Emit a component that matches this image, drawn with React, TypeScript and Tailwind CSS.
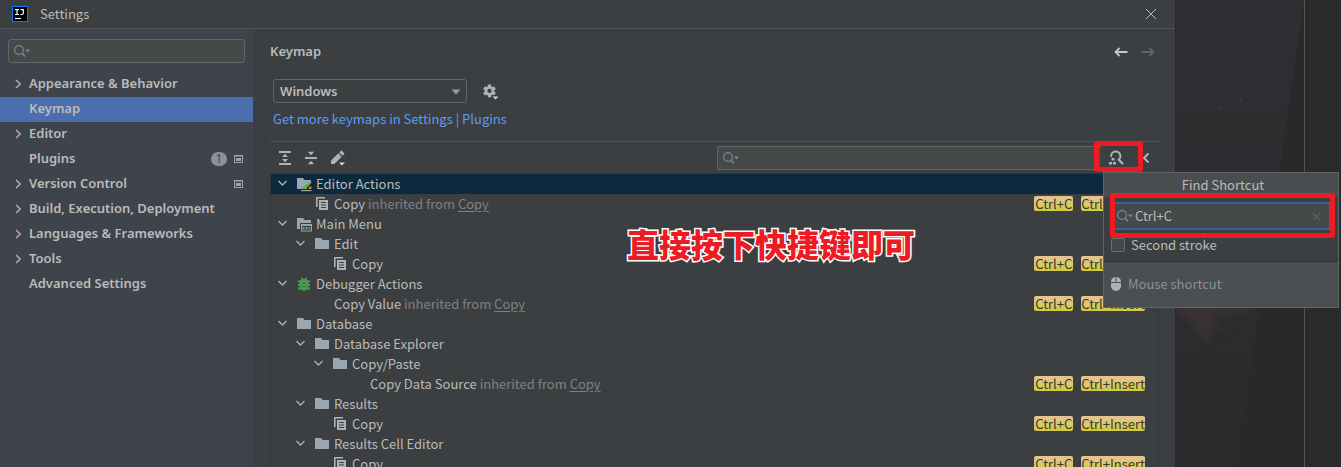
import type { ReactNode } from "react";

function SearchIcon() {
  return (
    <svg width="18" height="14" viewBox="0 0 18 14" fill="none" className="shrink-0">
      <circle cx="6" cy="6" r="4.4" stroke="#7b868c" strokeWidth="1.2" />
      <path d="M9 9.2 L12 12.4" stroke="#7b868c" strokeWidth="1.6" />
      <path d="M12 5.500h5l-2.500 3z" fill="#7b868c" />
    </svg>
  );
}

function ChevronRight() {
  return (
    <svg width="8" height="10" viewBox="0 0 8 10" fill="none">
      <path d="M1 1 L5.200 5 L1 9" stroke="#adb0b3" strokeWidth="1.5" />
    </svg>
  );
}

function ChevronDown() {
  return (
    <svg width="16" height="16" viewBox="0 0 16 16" fill="none">
      <path d="M4.500 5 L8.500 9 L12.500 5" stroke="#adb0b3" strokeWidth="1.4" />
    </svg>
  );
}

function FolderIcon() {
  return (
    <svg width="16" height="16" viewBox="0 0 16 16">
      <path d="M1 2h6l1.6 2H15v9H1z" fill="#9aa7b0" />
    </svg>
  );
}

function EditorFolderIcon() {
  return (
    <svg width="16" height="16" viewBox="0 0 16 16">
      <path d="M1 2h6l1.6 2H15v1.200L8 12l-2 1H1z" fill="#9aa7b0" />
      <path d="M7 12.500 L8.500 9.500 L13.500 4.500l2 2L10 12z" fill="#9aa7b0" />
      <path d="M5.500 13v-2h2.500v-1.500h2V8h1.500V6.500H14v2h-1.500V10H11v3z" fill="#62b543" />
      <rect x="12.500" y="10.500" width="3" height="2.500" fill="#f26522" />
      <rect x="5" y="14" width="10.500" height="1.200" fill="#9aa7b0" />
    </svg>
  );
}

function MenuFolderIcon() {
  return (
    <svg width="16" height="16" viewBox="0 0 16 16">
      <path d="M1 2h6l1.6 2H15v3H4v6H1z" fill="#9aa7b0" />
      <path d="M5 8h11v7.500H5z" fill="#9aa7b0" />
      <path d="M6 10h9v4.500H6z" fill="#33393c" />
      <rect x="6.500" y="11" width="2" height="2.500" fill="#62b543" />
      <rect x="9.500" y="11" width="2" height="2.500" fill="#40b6e0" />
      <rect x="12.500" y="11" width="2" height="2.500" fill="#f26522" />
    </svg>
  );
}

function CopyIcon() {
  return (
    <svg width="16" height="16" viewBox="0 0 16 16">
      <path d="M2 1h9v1.600H3.600V11H2z" fill="#afb1b3" />
      <path d="M5 4h9v10H5z" fill="#afb1b3" />
      <path d="M7 6.500h5M7 9h5M7 11.500h5" stroke="#3c3f41" strokeWidth="1.100" />
    </svg>
  );
}

function BugIcon() {
  return (
    <svg width="16" height="16" viewBox="0 0 16 16" fill="none">
      <path d="M5 1.500 L7 4 M11 1.500 L9 4" stroke="#499c54" strokeWidth="1.400" />
      <path d="M2 5.500h12M2 9h12M2 12.500h12" stroke="#499c54" strokeWidth="1.800" />
      <path d="M8 2.800c2 0 3.200 1 3.600 2.200.5 1.500.9 3 .9 4.500C12.500 12.500 10.500 14.500 8 14.500S3.500 12.500 3.500 9.500C3.500 8 3.900 6.500 4.400 5 4.800 3.800 6 2.800 8 2.800z" fill="#499c54" />
      <path d="M5.500 7.300h5M5.500 10.700h5" stroke="#41694a" strokeWidth="1" />
    </svg>
  );
}

function ProjectIcon() {
  return (
    <svg width="9" height="8" viewBox="0 0 9 8" fill="none">
      <rect x="0.500" y="0.500" width="8" height="7" stroke="#9aa7b0" />
      <rect x="2" y="3" width="5" height="3" fill="#9aa7b0" />
      <path d="M0 1h9" stroke="#9aa7b0" />
    </svg>
  );
}

function GearIcon() {
  return (
    <svg width="18" height="18" viewBox="0 0 18 18">
      <g fill="#afb1b3">
        <rect x="6.800" y="2.500" width="3.400" height="12.800" />
        <rect x="6.800" y="2.500" width="3.400" height="12.800" transform="rotate(60 8.500 8.900)" />
        <rect x="6.800" y="2.500" width="3.400" height="12.800" transform="rotate(120 8.500 8.900)" />
        <circle cx="8.500" cy="8.900" r="4.800" />
      </g>
      <circle cx="8.500" cy="8.900" r="2.100" fill="#3c3f41" />
      <path d="M11 13.500h7v3h-7z" fill="#3c3f41" />
      <path d="M11.500 14.500h6l-3 3z" fill="#d4d6d8" />
    </svg>
  );
}

function ExpandAllIcon() {
  return (
    <svg width="16" height="16" viewBox="0 0 16 16" fill="#afb1b3">
      <path d="M2 1h12v2H2zM2 13h12v2H2zM8 3.800l3 3.200H5zM8 12.200L11 9H5z" />
    </svg>
  );
}

function CollapseAllIcon() {
  return (
    <svg width="16" height="16" viewBox="0 0 16 16" fill="#afb1b3">
      <path d="M2 7h12v2H2zM4.800 1.800h6.400L8 5.300zM4.800 14.200h6.400L8 10.700z" />
    </svg>
  );
}

function PencilIcon() {
  return (
    <svg width="18" height="16" viewBox="0 0 18 16">
      <path d="M2 14v-3.400L9.300 3.300l3.400 3.400L5.400 14zM10.200 2.400L11.700.9a1 1 0 011.400 0l2 2a1 1 0 010 1.400l-1.500 1.500z" fill="#afb1b3" />
      <path d="M10 12.500h6l-3 3z" fill="#d4d6d8" />
    </svg>
  );
}

function FindShortcutIcon() {
  return (
    <svg width="16" height="16" viewBox="0 0 16 16" fill="none">
      <path d="M3.200 6.800A4.600 4.600 0 1 1 9.800 10.200" stroke="#afb1b3" strokeWidth="2" />
      <path d="M10.500 9.500 L15 14" stroke="#afb1b3" strokeWidth="2.400" />
      <path d="M3.500 8h3v2.500h-3zM1 12h3v2.500H1zM5 12h3v2.500H5z" fill="#afb1b3" />
    </svg>
  );
}

function Arrow({ flip, color }: { flip?: boolean; color: string }) {
  return (
    <svg width="14" height="10" viewBox="0 0 14 10" fill="none" className={flip ? "rotate-180" : ""}>
      <path d="M13.500 5H2M5.500 1 L1.500 5 L5.500 9" stroke={color} strokeWidth="1.800" />
    </svg>
  );
}

function MouseIcon() {
  return (
    <svg width="10" height="14" viewBox="0 0 10 14">
      <path d="M4.500 0v5H0C0 2 1.500.2 4.500 0zM5.500 0C8.500.2 10 2 10 5H5.500zM0 6h10v3a5 5 0 01-10 0z" fill="#afb1b3" />
    </svg>
  );
}

type Category = { label: string; open?: boolean; badge?: string; project?: boolean; active?: boolean };

const categories: Category[] = [
  { label: "Appearance & Behavior", open: true },
  { label: "Keymap", active: true },
  { label: "Editor", open: true },
  { label: "Plugins", badge: "1", project: true },
  { label: "Version Control", open: true, project: true },
  { label: "Build, Execution, Deployment", open: true },
  { label: "Languages & Frameworks", open: true },
  { label: "Tools", open: true },
  { label: "Advanced Settings" },
];

type Row = { level: number; label: string; icon?: ReactNode; group?: boolean; inherited?: boolean; keys?: boolean; selected?: boolean };

const rows: Row[] = [
  { level: 0, label: "Editor Actions", icon: <EditorFolderIcon />, group: true, selected: true },
  { level: 1, label: "Copy", icon: <CopyIcon />, inherited: true, keys: true },
  { level: 0, label: "Main Menu", icon: <MenuFolderIcon />, group: true },
  { level: 1, label: "Edit", icon: <FolderIcon />, group: true },
  { level: 2, label: "Copy", icon: <CopyIcon />, keys: true },
  { level: 0, label: "Debugger Actions", icon: <BugIcon />, group: true },
  { level: 1, label: "Copy Value", inherited: true, keys: true },
  { level: 0, label: "Database", icon: <FolderIcon />, group: true },
  { level: 1, label: "Database Explorer", icon: <FolderIcon />, group: true },
  { level: 2, label: "Copy/Paste", icon: <FolderIcon />, group: true },
  { level: 3, label: "Copy Data Source", inherited: true, keys: true },
  { level: 1, label: "Results", icon: <FolderIcon />, group: true },
  { level: 2, label: "Copy", icon: <CopyIcon />, keys: true },
  { level: 1, label: "Results Cell Editor", icon: <FolderIcon />, group: true },
  { level: 2, label: "Copy", icon: <CopyIcon />, keys: true },
];

const indents = ["pl-[3px]", "pl-[21px]", "pl-[39px]", "pl-[57px]"];

function Keys({ text }: { text: string }) {
  return (
    <kbd className="flex h-[15px] min-w-[39px] items-center justify-center rounded-[2px] bg-linear-to-b from-[#e6c393] to-[#d0cb38] font-[inherit] text-[13px] leading-[15px] text-[#3a3a2c]">
      {text}
    </kbd>
  );
}

function TreeRow({ row }: { row: Row }) {
  return (
    <li
      role="treeitem"
      aria-level={row.level + 1}
      aria-selected={!!row.selected}
      className={`flex h-5 items-center pr-[13px] ${indents[row.level]} ${row.selected ? "bg-[#0d293e]" : ""}`}
    >
      <span className="mr-1.5 w-4 shrink-0">{row.group && <ChevronDown />}</span>
      <span className="mr-1 w-4 shrink-0">{row.icon}</span>
      <span className="leading-5 whitespace-nowrap">
        {row.label}
        {row.inherited && (
          <span className="text-[#7f8182]">
            {" "}inherited from <a href="#copy" className="underline underline-offset-2">Copy</a>
          </span>
        )}
      </span>
      {row.keys && (
        <span className="ml-auto flex gap-2 pb-px">
          <Keys text="Ctrl+C" />
          <Keys text="Ctrl+Insert" />
        </span>
      )}
    </li>
  );
}

function FindShortcutPopup() {
  return (
    <section className="absolute top-[172px] right-0.5 w-[236px] border border-[#616365] bg-[#3c3f41]">
      <h2 className="bg-[#4a4d4f] pl-1 text-center leading-6">Find Shortcut</h2>
      <div className="relative px-[7px] pt-[5px]">
        <label className="flex h-7 items-center border-2 border-[#3d6185] bg-[#45494a] pr-2 pl-[3px]">
          <SearchIcon />
          <input aria-label="Shortcut" defaultValue="Ctrl+C" className="min-w-0 flex-1 bg-transparent pl-px outline-none" />
          <button aria-label="Clear" type="button">
            <svg width="9" height="9" viewBox="0 0 9 9" fill="none">
              <path d="M1 1l7 7M8 1L1 8" stroke="#6c7072" />
            </svg>
          </button>
        </label>
        <div className="pointer-events-none absolute -top-1 right-[3px] left-1.5 h-[45px] rounded-[3px] border-[5px] border-[#ed1c24]" />
      </div>
      <div className="flex h-[31px] items-center gap-1.5 px-[7px] pb-0.5">
        <input id="second" type="checkbox" className="h-3.5 w-3.5 appearance-none rounded-[2px] border border-[#6b6b6b] bg-[#43494a]" />
        <label htmlFor="second">Second stroke</label>
      </div>
      <div className="flex h-[46px] items-center gap-[7px] border-t border-[#2f3234] bg-[#4b4f51] px-[7px] pb-0.5 text-[#8c8f91]">
        <MouseIcon />
        Mouse shortcut
      </div>
    </section>
  );
}

function Backdrop() {
  return (
    <div className="w-[166px] shrink-0 border-l border-[#262829] bg-[#29292b]">
      <svg className="h-full w-full" viewBox="0 0 165 467" preserveAspectRatio="none">
        <defs>
          <linearGradient id="shade" x1="0" y1="0" x2="0" y2="1">
            <stop offset="0" stopColor="#302e32" />
            <stop offset="0.600" stopColor="#2d2c2f" />
            <stop offset="1" stopColor="#2a2a2c" />
          </linearGradient>
          <filter id="soft"><feGaussianBlur stdDeviation="3" /></filter>
        </defs>
        <path d="M0 0H128L60 467H0z" fill="url(#shade)" />
        <path d="M129 0H165V467H129z" fill="#2a2a2d" />
        <path d="M0 300H80L70 313 44 314 34 320 56 334 34 328 36 344 22 334 10 318 0 312z" fill="#383335" filter="url(#soft)" />
        <path d="M128.500 0V467" stroke="#545454" />
        <circle cx="43" cy="108" r="1.500" fill="#3b3a3e" />
        <circle cx="65" cy="101" r="1.500" fill="#3b3a3e" />
      </svg>
    </div>
  );
}

export default function App() {
  return (
    <div className="relative flex h-screen overflow-hidden bg-[#3c3f41] font-['Noto_Sans_CJK_SC',sans-serif] text-[13px] text-[#bbbbbb]">
      <div className="flex min-w-0 flex-1 flex-col">
        <header className="flex h-[29px] shrink-0 items-center border-b border-[#515354] pr-[18px] pl-3">
          <svg width="16" height="16" viewBox="0 0 16 16" fill="none">
            <rect x="0.500" y="0.500" width="15" height="15" fill="#000" stroke="#087cfa" />
            <path d="M3 3.600h4M5 3.600v5M3 8.500h4M8.500 3.600h2.800v3.400q0 1.500-1.500 1.500H8.300" stroke="#fff" strokeWidth="1.200" />
            <path d="M3 12.500h6" stroke="#fff" strokeWidth="1.200" />
          </svg>
          <h1 className="ml-3">Settings</h1>
          <button type="button" aria-label="Close" className="ml-auto">
            <svg width="12" height="12" viewBox="0 0 12 12" fill="none">
              <path d="M1 1l10 10M11 1L1 11" stroke="#b5b7b9" />
            </svg>
          </button>
        </header>
        <div className="flex min-h-0 flex-1">
          <nav className="w-[253px] shrink-0 bg-[#3f434c] pt-2.5">
            <label className="mx-2 mb-[9px] flex h-6 items-center rounded-[3px] border border-[#646464] bg-[#45494a] pl-1">
              <SearchIcon />
              <input aria-label="Search settings" className="min-w-0 flex-1 bg-transparent outline-none" />
            </label>
            <ul className="font-['Noto_Sans',sans-serif] font-semibold">
              {categories.map((c) => (
                <li key={c.label} className={`flex h-[25px] items-center pr-2.5 pb-px pl-[15px] ${c.active ? "bg-[#4b6eaf]" : ""}`}>
                  <span className="w-3.5">{c.open && <ChevronRight />}</span>
                  <a href="#category" className="whitespace-nowrap">{c.label}</a>
                  <span className="ml-auto flex items-center gap-[7px]">
                    {c.badge && (
                      <span className="h-3.5 w-4 rounded-full bg-[#87939a] text-center text-xs leading-[14px] font-normal text-[#3f434c]">
                        {c.badge}
                      </span>
                    )}
                    {c.project && <ProjectIcon />}
                  </span>
                </li>
              ))}
            </ul>
          </nav>
          <main className="flex min-w-0 flex-1 flex-col pr-4 pl-[17px]">
            <div className="flex h-[50px] shrink-0 items-center pb-[5px]">
              <h2 className="font-['Noto_Sans',sans-serif] font-semibold">Keymap</h2>
              <span className="ml-auto flex gap-[13px] pr-1">
                <button type="button" aria-label="Back"><Arrow color="#c4c6c8" /></button>
                <button type="button" aria-label="Forward"><Arrow flip color="#606366" /></button>
              </span>
            </div>
            <div className="flex items-center gap-3.5 pl-[3px]">
              <span className="relative">
                <select aria-label="Keymap" className="block h-6 w-[194px] appearance-none rounded-[3px] border border-[#646464] bg-[#3c3f41] pt-px pl-1.5 font-['Noto_Sans',sans-serif] font-semibold">
                  <option>Windows</option>
                </select>
                <svg width="10" height="6" viewBox="0 0 10 6" className="pointer-events-none absolute top-[10px] right-[6px]">
                  <path d="M0.500 0.500h9L5 5.500z" fill="#9a9da0" />
                </svg>
              </span>
              <button type="button" aria-label="Keymap options"><GearIcon /></button>
            </div>
            <a href="#plugins" className="mt-1.5 self-start pl-[3px] leading-5 whitespace-nowrap text-[#589df6]">
              Get more keymaps in Settings | Plugins
            </a>
            <div className="mt-3 flex h-8 shrink-0 items-center border-t border-[#515354] pl-[7px]">
              <span className="flex gap-2.5">
                <button type="button" aria-label="Expand all"><ExpandAllIcon /></button>
                <button type="button" aria-label="Collapse all"><CollapseAllIcon /></button>
                <button type="button" aria-label="Edit shortcut"><PencilIcon /></button>
              </span>
              <label className="ml-auto flex h-6 w-[384px] items-center rounded-l-[3px] border border-r-0 border-[#646464] bg-[#45494a] pl-1">
                <SearchIcon />
                <input aria-label="Search actions" className="min-w-0 flex-1 bg-transparent outline-none" />
              </label>
              <span className="relative ml-[7px]">
                <button type="button" aria-label="Find by shortcut" className="block"><FindShortcutIcon /></button>
                <span className="pointer-events-none absolute -top-[9px] -left-3.5 h-[31px] w-[49px] rounded-[3px] border-[5px] border-[#ed1c24]" />
              </span>
              <button type="button" aria-label="Clear filter" className="mr-[9px] ml-[18px]">
                <svg width="8" height="12" viewBox="0 0 8 12" fill="none">
                  <path d="M6.500 1.500L2 6l4.500 4.500" stroke="#afb1b3" strokeWidth="2" />
                </svg>
              </button>
            </div>
            <ul role="tree" className="min-h-0 flex-1 overflow-hidden border border-b-0 border-[#323537]">
              {rows.map((row, i) => (
                <TreeRow key={i} row={row} />
              ))}
            </ul>
          </main>
        </div>
      </div>
      <Backdrop />
      <FindShortcutPopup />
      <p className="pointer-events-none absolute top-[219px] left-[627px] text-[32px] leading-[48px] font-black whitespace-nowrap text-[#ed1c24] [paint-order:stroke_fill] [-webkit-text-stroke:3px_#ffffff]">
        直接按下快捷键即可
      </p>
    </div>
  );
}
